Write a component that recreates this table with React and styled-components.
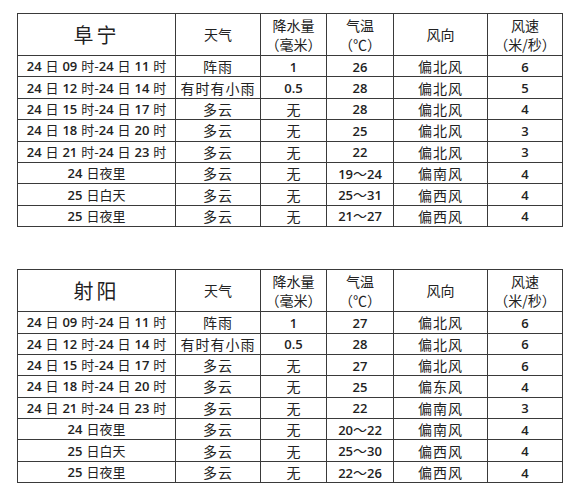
import React from "react";
import styled, { createGlobalStyle } from "styled-components";

const GlobalStyle = createGlobalStyle`
  html, body {
    margin: 0;
    padding: 0;
    background: #fff;
  }
  body {
    font-family: "Noto Sans CJK SC", "DejaVu Sans", sans-serif;
    color: #222;
  }
`;

const Page = styled.div`
  display: flex;
  flex-direction: column;
  gap: 42px;
  padding: 13px 0 0 17px;
`;

const Table = styled.table`
  width: 545px;
  border-collapse: collapse;
  table-layout: fixed;
  border: 1px solid #3a3a3a;
`;

const HeadRow = styled.tr`
  height: 42px;
`;

const Row = styled.tr`
  height: 21.4px;
`;

const Cell = styled.td`
  border: 1px solid #3a3a3a;
  padding: 0;
  text-align: center;
  vertical-align: middle;
  font-size: 14px;
  font-weight: 400;
  line-height: 18px;
  white-space: pre;
  letter-spacing: ${(p) => (p.$spread ? "1px" : "0")};
`;

const TimeCell = styled(Cell)`
  font-size: 13px;
  word-spacing: 1px;
`;

const HeadCell = styled(Cell)`
  line-height: 19px;
`;

const Title = styled(Cell)`
  font-size: 20px;
  letter-spacing: 3px;
`;

const Num = styled.span`
  font-family: "Open Sans", "DejaVu Sans", sans-serif;
  font-weight: 600;
  font-size: 13px;
`;

const widths = [158, 85, 66, 67, 94, 75];

const Mixed = ({ text }) =>
  text.split(/(\d+(?:\.\d+)?)/).map((part, i) =>
    /^\d/.test(part) ? <Num key={i}>{part}</Num> : <span key={i}>{part}</span>
  );

const tables = [
  {
    city: "阜宁",
    rows: [
      ["24 日 09 时-24 日 11 时", "阵雨", "1", "26", "偏北风", "6"],
      ["24 日 12 时-24 日 14 时", "有时有小雨", "0.5", "28", "偏北风", "5"],
      ["24 日 15 时-24 日 17 时", "多云", "无", "28", "偏北风", "4"],
      ["24 日 18 时-24 日 20 时", "多云", "无", "25", "偏北风", "3"],
      ["24 日 21 时-24 日 23 时", "多云", "无", "22", "偏北风", "3"],
      ["24 日夜里", "多云", "无", "19～24", "偏南风", "4"],
      ["25 日白天", "多云", "无", "25～31", "偏西风", "4"],
      ["25 日夜里", "多云", "无", "21～27", "偏西风", "4"],
    ],
  },
  {
    city: "射阳",
    rows: [
      ["24 日 09 时-24 日 11 时", "阵雨", "1", "27", "偏北风", "6"],
      ["24 日 12 时-24 日 14 时", "有时有小雨", "0.5", "28", "偏北风", "6"],
      ["24 日 15 时-24 日 17 时", "多云", "无", "27", "偏北风", "6"],
      ["24 日 18 时-24 日 20 时", "多云", "无", "25", "偏东风", "4"],
      ["24 日 21 时-24 日 23 时", "多云", "无", "22", "偏南风", "3"],
      ["24 日夜里", "多云", "无", "20～22", "偏南风", "4"],
      ["25 日白天", "多云", "无", "25～30", "偏西风", "4"],
      ["25 日夜里", "多云", "无", "22～26", "偏西风", "4"],
    ],
  },
];

const Forecast = ({ city, rows }) => (
  <Table>
    <colgroup>
      {widths.map((w, i) => (
        <col key={i} style={{ width: w }} />
      ))}
    </colgroup>
    <thead>
      <HeadRow>
        <Title as="th">{city}</Title>
        <HeadCell as="th">天气</HeadCell>
        <HeadCell as="th">
          降水量
          <br />
          （毫米）
        </HeadCell>
        <HeadCell as="th">
          气温
          <br />
          （℃）
        </HeadCell>
        <HeadCell as="th">风向</HeadCell>
        <HeadCell as="th">
          风速
          <br />
          （米/秒）
        </HeadCell>
      </HeadRow>
    </thead>
    <tbody>
      {rows.map((r, i) => (
        <Row key={i}>
          <TimeCell>
            <Mixed text={r[0]} />
          </TimeCell>
          <Cell $spread>{r[1]}</Cell>
          <Cell>
            <Mixed text={r[2]} />
          </Cell>
          <Cell>
            <Mixed text={r[3]} />
          </Cell>
          <Cell $spread>{r[4]}</Cell>
          <Cell>
            <Mixed text={r[5]} />
          </Cell>
        </Row>
      ))}
    </tbody>
  </Table>
);

export default function App() {
  return (
    <>
      <GlobalStyle />
      <Page>
        {tables.map((t) => (
          <Forecast key={t.city} {...t} />
        ))}
      </Page>
    </>
  );
}
